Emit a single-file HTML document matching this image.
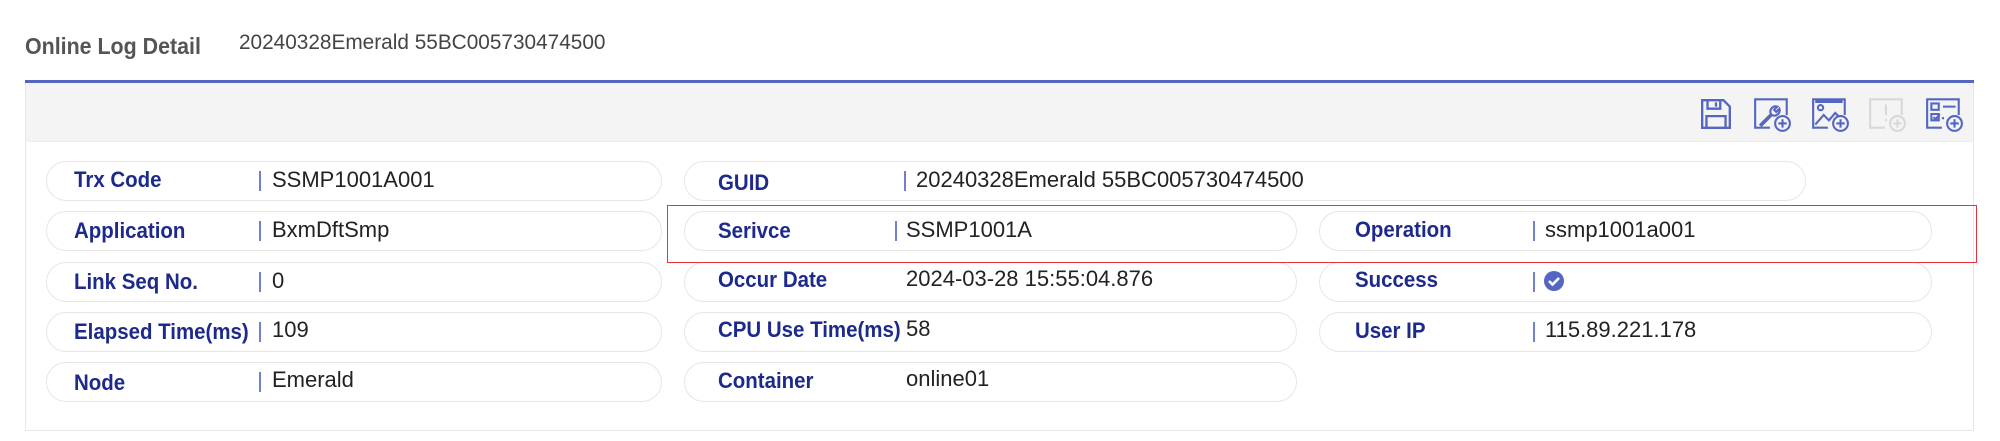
<!DOCTYPE html>
<html><head><meta charset="utf-8"><style>
*{margin:0;padding:0;box-sizing:border-box}
body{width:2000px;height:441px;background:#fff;font-family:"Liberation Sans",sans-serif;position:relative;overflow:hidden}
.a{position:absolute;white-space:nowrap}
.title{left:25px;top:33px;font-size:23px;font-weight:bold;color:#555;transform:scaleX(.93);transform-origin:0 0}
.sub{left:239px;top:31px;font-size:21px;color:#444;transform:scaleX(.99);transform-origin:0 0}
.line{left:25px;top:80px;width:1949px;height:3px;background:#5566c2}
.tb{left:25px;top:83px;width:1949px;height:58px;background:#f4f4f4;border-left:1px solid #e8e8e8;border-right:1px solid #e8e8e8}
.panel{left:25px;top:141px;width:1949px;height:290px;border:1px solid #e8e8e8;border-top:1px solid #eee}
.pill{position:absolute;height:40px;border:1.5px solid #e6e6e6;border-radius:20px}
.lb{position:absolute;font-size:22px;font-weight:bold;color:#1d2a8c;transform:scaleX(.93);transform-origin:0 50%;white-space:nowrap;line-height:40px}
.bar{position:absolute;width:2px;height:20px;background:#7180cc}
.v{position:absolute;font-size:22px;color:#222;line-height:40px;white-space:nowrap}
.red{left:667px;top:205px;width:1310px;height:58px;border:1.5px solid #e8323c;z-index:5}
svg{position:absolute}
</style></head><body>
<div class="a title">Online Log Detail</div>
<div class="a sub">20240328Emerald 55BC005730474500</div>
<div class="a line"></div>
<div class="a tb"></div>
<div class="a panel"></div>

<svg style="left:1699px;top:97px" width="34" height="34" viewBox="0 0 32 32" fill="none" stroke="#5566c2" stroke-width="2.2"><path d="M3 3h20l6 6v20H3z"/><path d="M8 3v8h12V3M16 5v4M7 29V18h18v11"/></svg>
<svg style="left:1752px;top:96px" width="40" height="36" viewBox="0 0 38 34" fill="none" stroke="#5566c2" stroke-width="2"><path d="M17 30H3V3h30v15"/><path d="M8 27l10-10a5 5 0 0 1 6-7l-3 3 2 2 3-3a5 5 0 0 1-7 6L9 28z"/><circle cx="29" cy="26" r="7" fill="#f4f4f4"/><path d="M29 22v8M25 26h8"/></svg>
<svg style="left:1810px;top:96px" width="40" height="36" viewBox="0 0 38 34" fill="none" stroke="#5566c2" stroke-width="2"><path d="M17 30H3V3h30v15"/><path d="M5 5h26" stroke-width="3"/><circle cx="10" cy="11" r="2.5"/><path d="M5 27l8-9 5 5 6-7 4 4"/><circle cx="29" cy="26" r="7" fill="#f4f4f4"/><path d="M29 22v8M25 26h8"/></svg>
<svg style="left:1867px;top:96px" width="40" height="36" viewBox="0 0 38 34" fill="none" stroke="#d8d8d8" stroke-width="2"><path d="M17 30H3V3h30v15"/><path d="M18 8v10M18 22v2"/><circle cx="29" cy="26" r="7" fill="#f4f4f4"/><path d="M29 22v8M25 26h8"/></svg>
<svg style="left:1924px;top:96px" width="40" height="36" viewBox="0 0 38 34" fill="none" stroke="#5566c2" stroke-width="2"><path d="M17 30H3V3h30v15"/><rect x="7" y="7" width="7" height="6"/><path d="M18 10h12M7 17h7v6H7zM9 20l2 2 4-5M17 21h2"/><circle cx="29" cy="26" r="7" fill="#f4f4f4"/><path d="M29 22v8M25 26h8"/></svg>

<div class="pill" style="left:46px;top:161px;width:616px"></div>
<div class="lb" style="left:74px;top:160px">Trx Code</div><div class="bar" style="left:259px;top:171px"></div><div class="v" style="left:272px;top:160px">SSMP1001A001</div>
<div class="pill" style="left:46px;top:211px;width:616px"></div>
<div class="lb" style="left:74px;top:211px">Application</div><div class="bar" style="left:259px;top:221px"></div><div class="v" style="left:272px;top:210px">BxmDftSmp</div>
<div class="pill" style="left:46px;top:262px;width:616px"></div>
<div class="lb" style="left:74px;top:262px">Link Seq No.</div><div class="bar" style="left:259px;top:272px"></div><div class="v" style="left:272px;top:261px">0</div>
<div class="pill" style="left:46px;top:312px;width:616px"></div>
<div class="lb" style="left:74px;top:312px">Elapsed Time(ms)</div><div class="bar" style="left:259px;top:322px"></div><div class="v" style="left:272px;top:310px">109</div>
<div class="pill" style="left:46px;top:362px;width:616px"></div>
<div class="lb" style="left:74px;top:363px">Node</div><div class="bar" style="left:259px;top:372px"></div><div class="v" style="left:272px;top:360px">Emerald</div>

<div class="pill" style="left:684px;top:161px;width:1122px"></div>
<div class="lb" style="left:718px;top:163px">GUID</div><div class="bar" style="left:904px;top:171px"></div><div class="v" style="left:916px;top:160px">20240328Emerald 55BC005730474500</div>
<div class="pill" style="left:684px;top:211px;width:613px"></div>
<div class="lb" style="left:718px;top:211px">Serivce</div><div class="bar" style="left:895px;top:221px"></div><div class="v" style="left:906px;top:210px">SSMP1001A</div>
<div class="pill" style="left:684px;top:262px;width:613px"></div>
<div class="lb" style="left:718px;top:260px">Occur Date</div><div class="v" style="left:906px;top:259px">2024-03-28 15:55:04.876</div>
<div class="pill" style="left:684px;top:312px;width:613px"></div>
<div class="lb" style="left:718px;top:310px">CPU Use Time(ms)</div><div class="v" style="left:906px;top:309px">58</div>
<div class="pill" style="left:684px;top:362px;width:613px"></div>
<div class="lb" style="left:718px;top:361px">Container</div><div class="v" style="left:906px;top:359px">online01</div>

<div class="pill" style="left:1319px;top:211px;width:613px"></div>
<div class="lb" style="left:1355px;top:210px">Operation</div><div class="bar" style="left:1533px;top:221px"></div><div class="v" style="left:1545px;top:210px">ssmp1001a001</div>
<div class="pill" style="left:1319px;top:262px;width:613px"></div>
<div class="lb" style="left:1355px;top:260px">Success</div><div class="bar" style="left:1533px;top:272px"></div>
<svg style="left:1543px;top:270px" width="22" height="22" viewBox="0 0 22 22"><circle cx="11" cy="11" r="10" fill="#5566c2"/><path d="M6 11l3.5 3.5L16 8" fill="none" stroke="#fff" stroke-width="2.6"/></svg>
<div class="pill" style="left:1319px;top:312px;width:613px"></div>
<div class="lb" style="left:1355px;top:311px">User IP</div><div class="bar" style="left:1533px;top:322px"></div><div class="v" style="left:1545px;top:310px">115.89.221.178</div>

<div class="a red"></div>
</body></html>
